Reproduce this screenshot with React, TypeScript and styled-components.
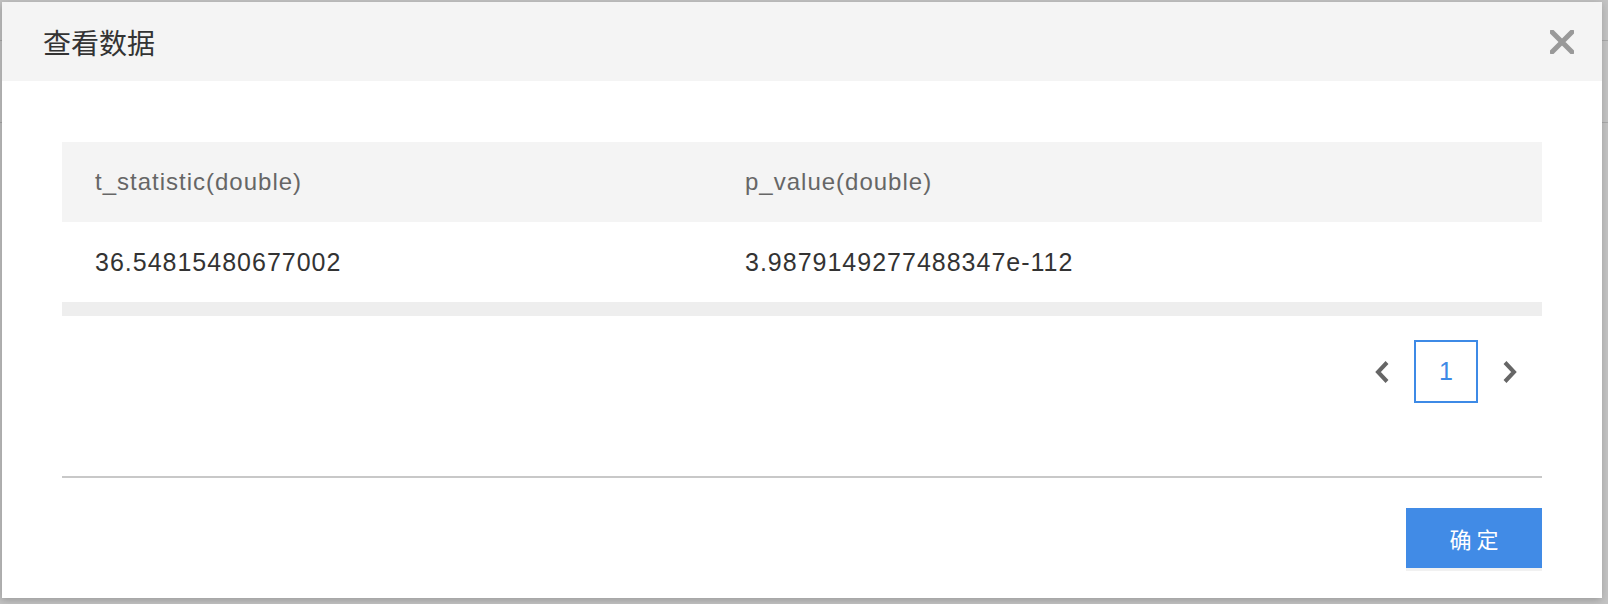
import React from "react";
import styled, { createGlobalStyle } from "styled-components";

const Global = createGlobalStyle`
  html, body {
    margin: 0;
    padding: 0;
    width: 1608px;
    height: 604px;
    overflow: hidden;
    background: #c3c3c3;
    font-family: "Liberation Sans", "Noto Sans CJK SC", sans-serif;
  }
  * { box-sizing: border-box; }
`;

const Backdrop = styled.div`
  width: 1608px;
  height: 604px;
  padding: 2px 6px 6px 2px;
  background:
    linear-gradient(#a9a9a9, #a9a9a9) 0 40px / 100% 1px no-repeat,
    linear-gradient(#a9a9a9, #a9a9a9) 0 122px / 100% 1px no-repeat,
    #c3c3c3;
`;

const Modal = styled.div`
  width: 1600px;
  height: 596px;
  background: #ffffff;
  display: flex;
  flex-direction: column;
  box-shadow: -1px 2px 8px rgba(0, 0, 0, 0.22);
`;

const Header = styled.div`
  height: 79px;
  background: #f4f4f4;
  display: flex;
  align-items: center;
  justify-content: space-between;
  padding: 0 28px 0 41px;
`;

const Title = styled.h1`
  margin: 0;
  font-size: 28px;
  font-weight: 400;
  color: #333333;
  font-family: "Noto Sans CJK SC", sans-serif;
  line-height: 1;
`;

const CloseButton = styled.button`
  width: 24px;
  height: 24px;
  padding: 0;
  border: none;
  background: transparent;
  display: flex;
  align-items: center;
  justify-content: center;
  cursor: pointer;
`;

const Body = styled.div`
  flex: 1;
  display: flex;
  flex-direction: column;
  padding: 61px 60px 30px;
`;

const Table = styled.table`
  width: 100%;
  border-collapse: collapse;
  table-layout: fixed;
`;

const HeadCell = styled.th<{ $w?: number }>`
  ${(p) => (p.$w ? `width: ${p.$w}px;` : "")}
  height: 80px;
  padding: 0 33px;
  background: #f4f4f4;
  text-align: left;
  font-weight: 400;
  font-size: 24px;
  letter-spacing: 1px;
  color: #666666;
`;

const Cell = styled.td`
  height: 80px;
  padding: 0 33px;
  font-size: 25px;
  letter-spacing: 1px;
  color: #333333;
`;

const ScrollBar = styled.div`
  height: 14px;
  background: #eeeeee;
`;

const Pager = styled.div`
  margin-top: 24px;
  display: flex;
  justify-content: flex-end;
`;

const PageArrow = styled.button`
  width: 64px;
  height: 63px;
  padding: 0;
  border: none;
  background: transparent;
  display: flex;
  align-items: center;
  justify-content: center;
`;

const PageItem = styled.button<{ $active?: boolean }>`
  width: 64px;
  height: 63px;
  padding: 0;
  background: #ffffff;
  border: 2px solid ${(p) => (p.$active ? "#3d8ae6" : "#dddddd")};
  color: ${(p) => (p.$active ? "#3d8ae6" : "#666666")};
  font-family: "Liberation Sans", sans-serif;
  font-size: 25px;
  display: flex;
  align-items: center;
  justify-content: center;
`;

const Divider = styled.div`
  margin-top: 73px;
  height: 2px;
  background: #c8c8c8;
`;

const Footer = styled.div`
  margin-top: 30px;
  display: flex;
  justify-content: flex-end;
`;

const PrimaryButton = styled.button`
  width: 136px;
  height: 60px;
  border: none;
  background: #418be6;
  color: #ffffff;
  font-family: "Noto Sans CJK SC", sans-serif;
  font-size: 22px;
  box-shadow: 0 3px 0 #f1f1f1;
  cursor: pointer;
`;

const Chevron = ({ dir }: { dir: "left" | "right" }) => (
  <svg width="16" height="24" viewBox="0 0 16 24">
    <path
      d={dir === "left" ? "M13 2.5 L4 12 L13 21.5" : "M3 2.5 L12 12 L3 21.5"}
      fill="none"
      stroke="#666666"
      strokeWidth="4"
    />
  </svg>
);

export default function App() {
  return (
    <>
      <Global />
      <Backdrop>
        <Modal>
          <Header>
            <Title>查看数据</Title>
            <CloseButton aria-label="close">
              <svg width="24" height="24" viewBox="0 0 24 24">
                <path
                  d="M2 2 L22 22 M22 2 L2 22"
                  stroke="#999999"
                  strokeWidth="5"
                  strokeLinecap="square"
                />
              </svg>
            </CloseButton>
          </Header>
          <Body>
            <Table>
              <thead>
                <tr>
                  <HeadCell $w={650}>t_statistic(double)</HeadCell>
                  <HeadCell>p_value(double)</HeadCell>
                </tr>
              </thead>
              <tbody>
                <tr>
                  <Cell>36.54815480677002</Cell>
                  <Cell>3.9879149277488347e-112</Cell>
                </tr>
              </tbody>
            </Table>
            <ScrollBar />
            <Pager>
              <PageArrow aria-label="previous">
                <Chevron dir="left" />
              </PageArrow>
              <PageItem $active>1</PageItem>
              <PageArrow aria-label="next">
                <Chevron dir="right" />
              </PageArrow>
            </Pager>
            <Divider />
            <Footer>
              <PrimaryButton>确 定</PrimaryButton>
            </Footer>
          </Body>
        </Modal>
      </Backdrop>
    </>
  );
}
